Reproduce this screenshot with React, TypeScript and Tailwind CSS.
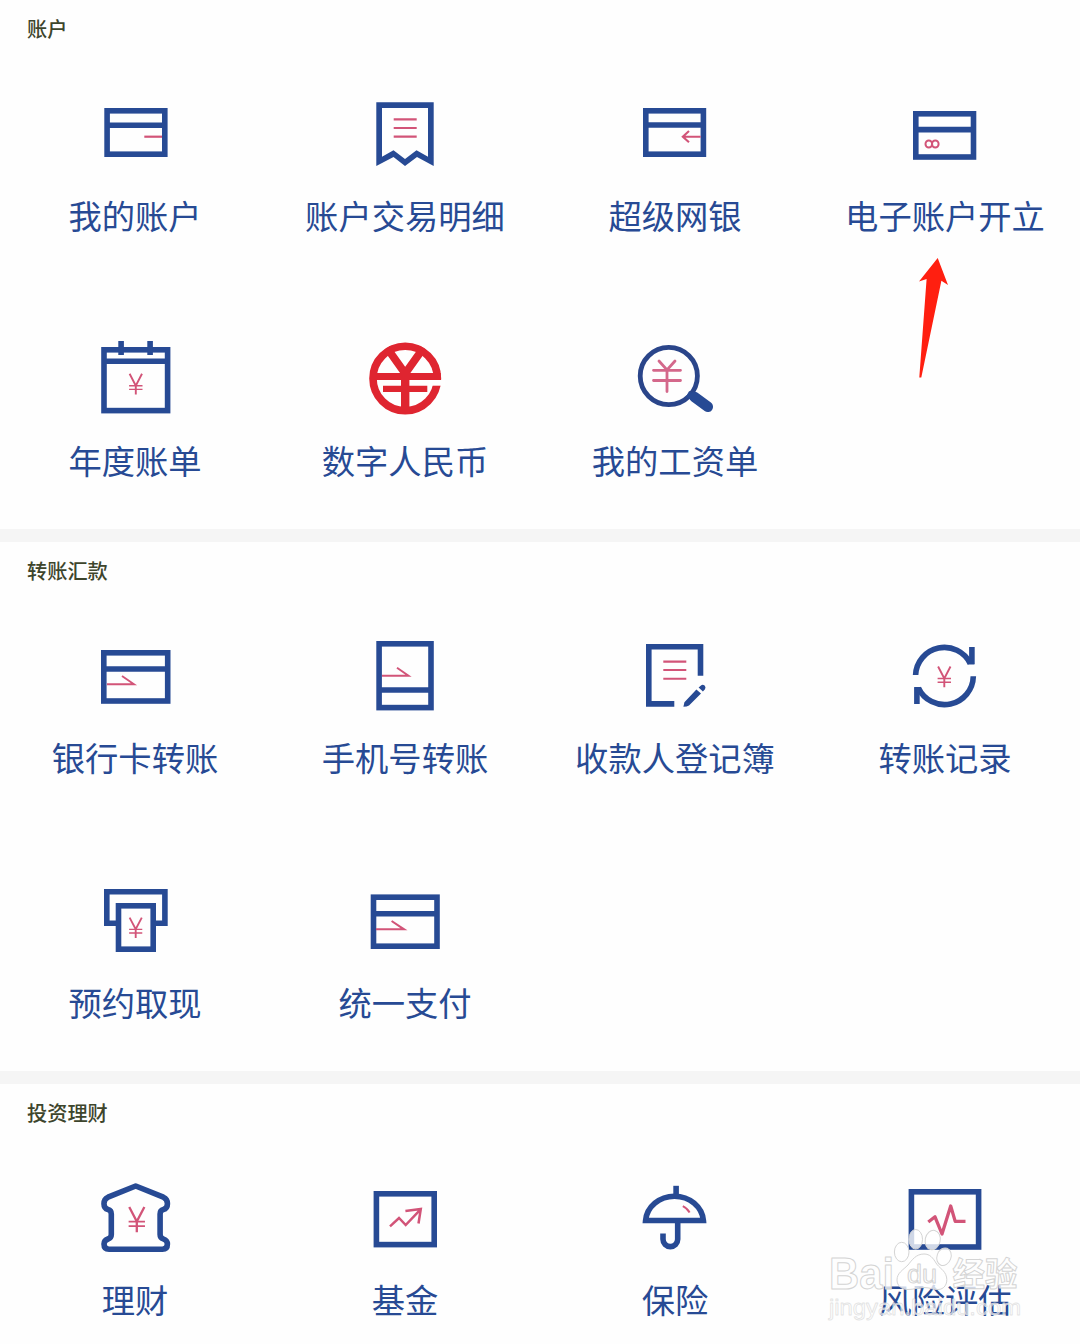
import type { ReactNode } from "react";

const BLUE = "#274a94";
const PINK = "#d25478";

function Icon({ children }: { children: ReactNode }) {
  return (
    <svg className="h-24 w-24" viewBox="0 0 96 96" fill="none" stroke={BLUE} strokeWidth={5.6}>
      {children}
    </svg>
  );
}

type Box = { x1: number; y1: number; x2: number; y2: number };

/** Rectangle given by its outer edges. */
function Frame({ x1, y1, x2, y2 }: Box) {
  return <rect x={x1 + 2.8} y={y1 + 2.8} width={x2 - x1 - 5.6} height={y2 - y1 - 5.6} />;
}

function Card({ x1, y1, x2, y2, bar }: Box & { bar: number }) {
  return (
    <>
      <Frame x1={x1} y1={y1} x2={x2} y2={y2} />
      <path d={`M${x1 + 3} ${bar}H${x2 - 3}`} />
    </>
  );
}

function Yen({ x, y, k = 1 }: { x: number; y: number; k?: number }) {
  return (
    <g transform={`translate(${x} ${y}) scale(${k})`} stroke={PINK} strokeWidth={1.7}>
      <path d="M-6.2 -10.3L0 1.6L6.2 -10.3M0 1V10.4" strokeWidth={1.9} />
      <path d="M-6.7 1.7H6.7M-6.7 5.4H6.7" strokeWidth={1.4} />
    </g>
  );
}

const icons = {
  account: (
    <Icon>
      <Card x1={17.3} y1={22} x2={80.6} y2={71} bar={39.2} />
      <path d="M57.3 50.7H75" stroke={PINK} strokeWidth={2.2} />
    </Icon>
  ),
  receipt: (
    <Icon>
      <path
        d="M19.3 16.3H76.7V80L60 71L48 80L36.5 71L19.3 80ZM25 22V70.7L36.5 64.3L48 73L59.5 64.3L71 70.7V22Z"
        fill={BLUE}
        fillRule="evenodd"
        stroke="none"
      />
      <path d="M36.7 33.3H59.7M36.7 42H59.7M36.7 50.7H59.7" stroke={PINK} strokeWidth={2.2} />
    </Icon>
  ),
  superBank: (
    <Icon>
      <Card x1={16} y1={22} x2={79.2} y2={71} bar={39} />
      <path d="M73.7 50.7H56M62 45L55.8 50.7L62 56.3" stroke={PINK} strokeWidth={2.1} />
    </Icon>
  ),
  eAccount: (
    <Icon>
      <Card x1={16} y1={25} x2={79.3} y2={73.8} bar={43.6} />
      <g stroke={PINK} strokeWidth={2}>
        <ellipse cx={31.8} cy={58} rx={3.3} ry={3.6} />
        <ellipse cx={38.3} cy={58} rx={3.3} ry={3.6} />
      </g>
    </Icon>
  ),
  calendar: (
    <Icon>
      <Card x1={14.2} y1={16} x2={83.4} y2={82.4} bar={30.2} />
      <path d="M34.1 10V24M63.1 10V24" />
      <Yen x={48.8} y={53} />
    </Icon>
  ),
  digital: (
    <Icon>
      <g stroke="#df2530">
        <circle cx={48.2} cy={47.5} r={32.2} strokeWidth={7.6} />
        <path d="M30 17L48.2 42.5L66.4 17" strokeWidth={7.8} />
        <path d="M48.2 40V82" strokeWidth={8.4} />
        <rect x={72} y={49} width={16} height={5.7} fill="#fff" stroke="none" />
        <path d="M16 45.5H83.8" strokeWidth={7} />
        <path d="M26 57.8H70.3" strokeWidth={6.3} />
      </g>
    </Icon>
  ),
  payslip: (
    <Icon>
      <circle cx={41.8} cy={45} r={28.6} strokeWidth={4.8} stroke="#2a458a" />
      <path d="M60.5 63L68 67" strokeWidth={7} />
      <path d="M67.5 66L80.8 75.8" strokeWidth={10.5} strokeLinecap="round" />
      <path
        d="M32 30L40 39L48 30M40 39V60.5M26.5 39.3H53.5M26.5 49.5H53.5"
        stroke="#d4688b"
        strokeWidth={2.8}
        strokeLinecap="round"
      />
    </Icon>
  ),
  cardTransfer: (
    <Icon>
      <Card x1={14} y1={22} x2={83.5} y2={75.8} bar={41} />
      <path d="M20 56.3H47L35 48" stroke={PINK} strokeWidth={1.9} />
    </Icon>
  ),
  phoneTransfer: (
    <Icon>
      <Card x1={19.3} y1={13} x2={76.8} y2={82.4} bar={62} />
      <path d="M25 47.8H51.5L40 39.7" stroke={PINK} strokeWidth={2} />
    </Icon>
  ),
  payee: (
    <Icon>
      <path d="M73.5 47.7V18.8H21.8V75.9H47.3" />
      <path d="M36.3 33.6H59.3M36.3 42H59.3M36.3 50.7H59.3" stroke={PINK} strokeWidth={2.1} />
      <path
        d="M56.4 78.8L57.4 74.2L69.4 61.4L74 65.6L62 77.4Q60 78.8 56.4 78.8ZM71.6 59.6L74 57.6Q75.6 56 77.6 57.6Q79.2 59.4 78 61.2L75.9 63.4Z"
        fill={BLUE}
        stroke="none"
      />
    </Icon>
  ),
  records: (
    <Icon>
      <path d="M18.6 47A28.8 28.8 0 0 1 73.2 35.5M76.3 48.3A28.8 28.8 0 0 1 21.4 60" />
      <path d="M74.9 19V36M19.9 59.2V76" />
      <path d="M70.6 36.4L77.6 36.4L74 30ZM17.1 59L24.2 59L21 65Z" fill={BLUE} stroke="none" />
      <Yen x={47.3} y={48.8} />
    </Icon>
  ),
  withdraw: (
    <Icon>
      <path d="M29 50.2H19.8V18.8H77.9V50.2H69" />
      <Frame x1={28.7} y1={30} x2={69} y2={79} />
      <Yen x={48.7} y={54.7} k={0.98} />
    </Icon>
  ),
  unifiedPay: (
    <Icon>
      <Card x1={13.7} y1={21.4} x2={82.8} y2={76} bar={40.7} />
      <path d="M19 56.3H47L34.6 48" stroke={PINK} strokeWidth={2.1} />
    </Icon>
  ),
  wealth: (
    <Icon>
      <path
        d="M48.7 16L21 27.2Q17 29 17 33.5V34Q17 38.5 21 39.5Q24.3 40.3 24.3 44V64.5Q24.3 67.8 21 69Q17 70.5 17 74Q17 79.2 22 79.2H75.4Q80.4 79.2 80.4 74Q80.4 70.5 76.4 69Q73.1 67.8 73.1 64.5V44Q73.1 40.3 76.4 39.5Q80.4 38.5 80.4 34V33.5Q80.4 29 76.4 27.2Z"
        strokeLinejoin="round"
      />
      <Yen x={49.8} y={49.6} k={1.22} />
    </Icon>
  ),
  fund: (
    <Icon>
      <Frame x1={16.6} y1={21} x2={80} y2={77.4} />
      <path
        d="M33 56.3L42 48L48.7 55L63.6 39.3M48.4 41L63.8 39L61.5 53.5"
        stroke={PINK}
        strokeWidth={2.5}
      />
    </Icon>
  ),
  insurance: (
    <Icon>
      <path d="M18.6 50.5A29 26.5 0 0 1 76.4 50.5Z" />
      <path d="M49.1 15.8V24" />
      <path d="M50.7 52V69.3A7.3 7.3 0 0 1 36 69.3V63.4" />
      <path d="M55.8 36.2Q60 38 62.6 42.6" stroke={PINK} strokeWidth={2} />
    </Icon>
  ),
  risk: (
    <Icon>
      <Frame x1={11.6} y1={19} x2={84.4} y2={79.8} />
      <path
        d="M31.3 52L38 46.8L45 64L53.7 36L58.2 51.4H68.5"
        stroke={PINK}
        strokeWidth={3.3}
        strokeLinejoin="round"
      />
    </Icon>
  ),
};

type IconName = keyof typeof icons;

const sections: { title: string; items: [IconName, string][] }[] = [
  {
    title: "账户",
    items: [
      ["account", "我的账户"],
      ["receipt", "账户交易明细"],
      ["superBank", "超级网银"],
      ["eAccount", "电子账户开立"],
      ["calendar", "年度账单"],
      ["digital", "数字人民币"],
      ["payslip", "我的工资单"],
    ],
  },
  {
    title: "转账汇款",
    items: [
      ["cardTransfer", "银行卡转账"],
      ["phoneTransfer", "手机号转账"],
      ["payee", "收款人登记簿"],
      ["records", "转账记录"],
      ["withdraw", "预约取现"],
      ["unifiedPay", "统一支付"],
    ],
  },
  {
    title: "投资理财",
    items: [
      ["wealth", "理财"],
      ["fund", "基金"],
      ["insurance", "保险"],
      ["risk", "风险评估"],
    ],
  },
];

function Pointer() {
  return (
    <svg className="absolute top-[256px] left-[916px] h-[124px] w-9" viewBox="0 0 36 124">
      <path d="M21.7 2L32 29L25.4 24.8L5.3 121.4H3.3L10.6 23L3 25.4Z" fill="#ff1f10" />
    </svg>
  );
}

function Watermark() {
  return (
    <svg
      className="absolute top-[1220px] left-[820px] h-[110px] w-[210px]"
      viewBox="0 0 210 110"
      fill="#fff"
      fillOpacity={0.78}
      stroke="#d4d4d4"
      strokeWidth={1}
      strokeLinejoin="round"
      fontFamily="'Liberation Sans', 'Noto Sans CJK SC', sans-serif"
      fontWeight={700}
    >
      <text x={9} y={68.5} fontSize={44} textLength={65} lengthAdjust="spacingAndGlyphs">
        Bai
      </text>
      <ellipse cx={81.7} cy={32} rx={7.3} ry={9.7} />
      <ellipse cx={95.7} cy={19.3} rx={6.8} ry={9.8} />
      <ellipse cx={112.7} cy={20} rx={7.5} ry={9.8} transform="rotate(12 112.7 20)" />
      <ellipse cx={124} cy={36.7} rx={7} ry={9} transform="rotate(20 124 36.7)" />
      <path d="M104 34C96 34 92 40 88 45C83 50 77 53 77 60C77 66 82 69.5 88 69.5C94 69.5 98 67.5 104 67.5C110 67.5 112 69.5 118 69.5C124 69.5 128 64 126.5 57C125 50 119 48 116 43C113 38 110 34 104 34Z" />
      <text
        x={87}
        y={62.5}
        fontSize={25}
        fontWeight={400}
        textLength={30}
        lengthAdjust="spacingAndGlyphs"
      >
        du
      </text>
      <text x={132.5} y={66} fontSize={33} textLength={65} lengthAdjust="spacingAndGlyphs">
        经验
      </text>
      <text
        x={9}
        y={94.5}
        fontSize={22}
        fontWeight={400}
        fillOpacity={0.6}
        stroke="#dcdcdc"
        strokeOpacity={0.8}
        strokeWidth={0.8}
        textLength={192}
        lengthAdjust="spacingAndGlyphs"
      >
        jingyan.baidu.com
      </text>
    </svg>
  );
}

export default function App() {
  return (
    <div className="relative h-[1344px] w-[1080px] overflow-hidden bg-[#fefefe] font-['Noto_Sans_CJK_SC',sans-serif]">
      <main className="divide-y-[13px] divide-[#f5f5f5]">
        {sections.map((section) => (
          <section key={section.title}>
            <h2 className="flex h-[60px] items-center pb-px pl-[27px] text-[20.2px] leading-none font-medium text-[#3d452c]">
              {section.title}
            </h2>
            <ul className="grid auto-rows-[245px] grid-cols-4 pt-[26px] [&:has(>:nth-child(5))]:-mb-[47px]">
              {section.items.map(([icon, label]) => (
                <li key={label} className="flex flex-col items-center gap-[11px]">
                  {icons[icon]}
                  <span className="text-[33.3px] leading-[44px] whitespace-nowrap text-[#274a94]">
                    {label}
                  </span>
                </li>
              ))}
            </ul>
          </section>
        ))}
      </main>
      <Pointer />
      <Watermark />
    </div>
  );
}
